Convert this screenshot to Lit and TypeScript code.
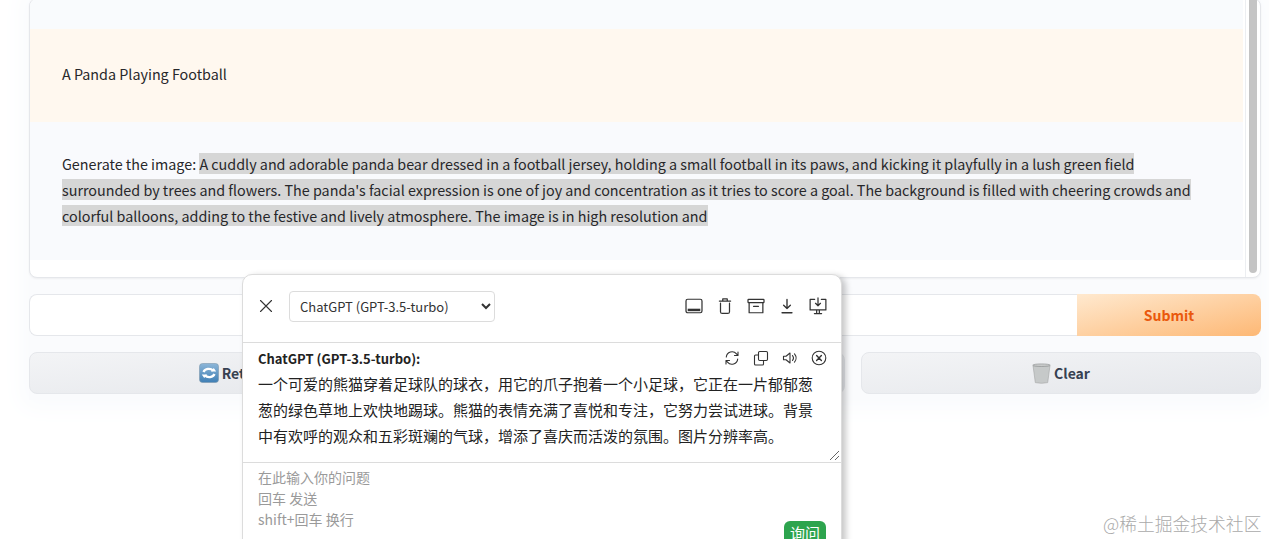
import { LitElement, html, css, svg } from "lit";
import { customElement } from "lit/decorators.js";

const stroke = (w: number, body: unknown, size = 16) => html`<svg class="ico" width=${size} height=${size} viewBox="0 0 16 16" fill="none" stroke="#333" stroke-width=${w} stroke-linecap="round" stroke-linejoin="round">${body}</svg>`;

const retryEmoji = html`<svg width="20" height="20" viewBox="0 0 20 20" class="emoji">
  <defs><linearGradient id="rb" x1="0" y1="0" x2="0" y2="1"><stop offset="0" stop-color="#8db6d8"/><stop offset="1" stop-color="#3f7fb5"/></linearGradient></defs>
  <rect x="0.500" y="0.500" width="19" height="19" rx="3" fill="url(#rb)" stroke="#7c97ad" stroke-width=".6"/>
  <path d="M4.500 9a5.600 4.800 0 0 1 9.600-1.400M15.500 11a5.600 4.800 0 0 1-9.600 1.400" fill="none" stroke="#fff" stroke-width="2.300"/>
  <path d="M11.800 8.600h5.400l-2.400-3.600zM8.200 11.400H2.800l2.400 3.600z" fill="#fff"/>
</svg>`;

const trashEmoji = html`<svg width="19" height="21" viewBox="0 0 19 21" class="emoji">
  <defs><pattern id="mesh" width="1.600" height="1.600" patternUnits="userSpaceOnUse"><rect width="1.600" height="1.600" fill="#dfe1e1"/><path d="M0 0l1.600 1.600M1.600 0L0 1.600" stroke="#a5a9a9" stroke-width=".35"/></pattern></defs>
  <path d="M1 2.500 3.300 19.600Q9.500 21 15.700 19.600L18 2.500Q9.500 4.500 1 2.500z" fill="url(#mesh)" stroke="#a2a5a5" stroke-width=".6"/>
  <ellipse cx="9.500" cy="2.200" rx="8.700" ry="1.300" fill="#c9cbcb" stroke="#8a8d8d" stroke-width=".6"/>
</svg>`;

@customElement("app-root")
export class AppRoot extends LitElement {
  static styles = css`
    :host { display: block; position: relative; width: 1269px; height: 539px; overflow: hidden; background: #fff;
      font-family: "Noto Sans CJK SC", "Noto Sans", sans-serif; color: #27272a; font-size: 14.33px; }
    * { box-sizing: border-box; }
    .page { display: flex; flex-direction: column; gap: 16px; margin: -2px 8px 0 29px; padding-bottom: 6px;
      box-shadow: 0 0 24px 8px #f9fbfd; background: #fafbfd; }
    .chat { height: 280px; background: #fff; border: 1px solid #e5e7eb; border-radius: 8px; position: relative; overflow: hidden; display: flex; flex-direction: column; box-shadow: 0 1px 2px rgba(0,0,0,.05); }
    .msg { flex: none; padding: 0 43px 0 32px; width: 1213px; }
    .bot-top { height: 30px; background: #f9fbfd; }
    .user { height: 93px; background: #fff8ef; display: flex; align-items: center; line-height: 26px; padding-bottom: 3px; }
    .bot { height: 138px; background: #f9fafd; padding-top: 29px; line-height: 26px; color: #27272a; }
    .sel { background: #d6d6d6; }
    .scrollbar { position: absolute; right: 3px; top: -4px; width: 8px; height: 278px; background: #c4c4c4; border-radius: 0 0 5px 5px; }
    .track { position: absolute; right: 14px; top: 0; bottom: 0; width: 1px; background: #eceef1; }
    .row { display: flex; height: 42px; }
    .input { flex: 1; background: #fff; border: 1px solid #e5e7eb; border-right: none; border-radius: 8px 0 0 8px; }
    .submit { width: 184px; border-radius: 0 8px 8px 0; background: linear-gradient(to bottom right, #ffe9cf, #fdb875);
      color: #ea580c; font-weight: 700; font-size: 14px; display: flex; align-items: center; justify-content: center; }
    .btns { display: grid; grid-template-columns: repeat(3, 1fr); gap: 16px; height: 42px; }
    .btn { background: linear-gradient(to bottom right, #f3f4f6, #e5e7eb); border: 1px solid #e5e7eb; border-radius: 8px;
      display: flex; align-items: center; justify-content: center; gap: 3px; font-weight: 700; color: #374151; font-size: 14px; }
    .emoji { flex: none; }

    .panel { position: absolute; left: 242px; top: 274px; width: 600px; height: 285px; background: #fff; border: 1px solid #dcdcdc; border-radius: 10px 10px 0 0;
      box-shadow: 4px 2px 6px rgba(0,0,0,.22); color: #222; }
    .head { height: 68px; display: flex; align-items: center; padding: 0 14px 5px 15px; border-bottom: 1px solid #dcdcdc; }
    .close { margin-right: 15px; display: flex; }
    select { width: 206px; height: 31px; border: 1px solid #dcdcdc; border-radius: 4px; background: #fff; padding-left: 6px; font: 13px "Noto Sans CJK SC", sans-serif; color: #333; }
    .tools { margin-left: auto; display: flex; gap: 13px; align-items: center; }
    .ico { display: block; flex: none; }
    .resp { height: 120px; border-bottom: 1px solid #dcdcdc; padding: 4px 14px 0 15px; position: relative; }
    .title { display: flex; align-items: center; height: 22px; font-size: 13px; font-weight: 700; }
    .mini { margin-left: auto; display: flex; gap: 13px; align-items: center; padding-right: 0; }
    .text { font-size: 15px; line-height: 26px; margin-top: 2px; padding-right: 1px; }
    .grip { position: absolute; right: 1px; bottom: 1px; }
    .ask { padding: 4px 15px; font-size: 14px; line-height: 21px; color: #9a9a9a; position: relative; height: 95px; }
    .send { position: absolute; left: 541px; top: 58px; width: 42px; height: 30px; background: #2da44e; color: #fff; border-radius: 6px; font-size: 15px; text-align: center; line-height: 24px; }
    .mark { position: absolute; left: 1103px; top: 512px; font-size: 17.800px; line-height: 22px; color: #aaa; font-weight: 300; white-space: nowrap; }
  `;

  render() {
    return html`
      <div class="page">
        <div class="chat">
          <div class="msg bot-top"></div>
          <div class="msg user">A Panda Playing Football</div>
          <div class="msg bot">Generate the image: <span class="sel">A cuddly and adorable panda bear dressed in a football jersey, holding a small football in its paws, and kicking it playfully in a lush green field surrounded by trees and flowers. The panda's facial expression is one of joy and concentration as it tries to score a goal. The background is filled with cheering crowds and colorful balloons, adding to the festive and lively atmosphere. The image is in high resolution and</span></div>
          <div class="track"></div>
          <div class="scrollbar"></div>
        </div>
        <div class="row"><div class="input"></div><div class="submit">Submit</div></div>
        <div class="btns">
          <div class="btn">${retryEmoji}Retry</div>
          <div class="btn">Undo</div>
          <div class="btn">${trashEmoji}Clear</div>
        </div>
      </div>

      <div class="panel">
        <div class="head">
          <div class="close">${stroke(1.100, svg`<path d="M2.500 2.500l11 11M13.500 2.500l-11 11"/>`)}</div>
          <select><option>ChatGPT (GPT-3.5-turbo)</option></select>
          <div class="tools">
            ${stroke(1.100, svg`<rect x="0.900" y="2" width="14.200" height="12" rx="1.500"/><rect x="2.400" y="10.400" width="11.200" height="2.200" fill="#333" stroke="none"/>`, 18)}
            ${stroke(1.100, svg`<path d="M3 3.600h10M6 3.400V1.700h4v1.700M4 5.500v7.500a1.600 1.600 0 0 0 1.600 1.600h4.800a1.600 1.600 0 0 0 1.600-1.600V5.500"/>`, 18)}
            ${stroke(1.100, svg`<rect x="0.900" y="2.200" width="14.200" height="2.800" rx=".5"/><path d="M1.900 5v9h12.200V5M5.800 8.300h4.400"/>`, 18)}
            ${stroke(1.200, svg`<path d="M8 2.200v8M5 7.400 8 10.300l3-2.900M3.600 14h8.800"/>`, 18)}
            ${stroke(1.100, svg`<path d="M5 2.200H1v9.300h14V2.200h-4M8 .8v7M5.800 5.600 8 7.800l2.200-2.200M6.800 11.500v3M9.200 11.500v3M4.800 14.700h6.400"/>`, 18)}
          </div>
        </div>
        <div class="resp">
          <div class="title">ChatGPT (GPT-3.5-turbo):
            <div class="mini">
              ${stroke(1.100, svg`<path d="M2.300 7A5.800 5.800 0 0 1 12.500 3.800L14 5.500M13.700 9A5.800 5.800 0 0 1 3.500 12.200L2 10.500M14 2v3.500h-3.500M2 14v-3.500h3.500"/>`)}
              ${stroke(1.100, svg`<rect x="5.500" y="1.500" width="9" height="9" rx="1.200"/><path d="M5.500 5H2.500a1 1 0 0 0-1 1v8a1 1 0 0 0 1 1h7a1 1 0 0 0 1-1v-3.500"/>`)}
              ${stroke(1.100, svg`<path d="M1.500 6.200v3.600h2.500L8 13V3L4 6.200zM10.500 5.500a4 4 0 0 1 0 5M12.500 3.800a6.500 6.500 0 0 1 0 8.400"/>`)}
              ${stroke(1.100, svg`<circle cx="8" cy="8" r="6.800"/><path d="M5.600 5.600l4.800 4.800M10.400 5.600l-4.800 4.800" stroke-width="1.400"/>`)}
            </div>
          </div>
          <div class="text">一个可爱的熊猫穿着足球队的球衣，用它的爪子抱着一个小足球，它正在一片郁郁葱葱的绿色草地上欢快地踢球。熊猫的表情充满了喜悦和专注，它努力尝试进球。背景中有欢呼的观众和五彩斑斓的气球，增添了喜庆而活泼的氛围。图片分辨率高。</div>
          <svg class="grip" width="11" height="11" viewBox="0 0 11 11" stroke="#666" fill="none"><path d="M1 10 10 1M6 10l4-4"/></svg>
        </div>
        <div class="ask">在此输入你的问题<br>回车 发送<br>shift+回车 换行
          <div class="send">询问</div>
        </div>
      </div>
      <div class="mark">@稀土掘金技术社区</div>
    `;
  }
}
